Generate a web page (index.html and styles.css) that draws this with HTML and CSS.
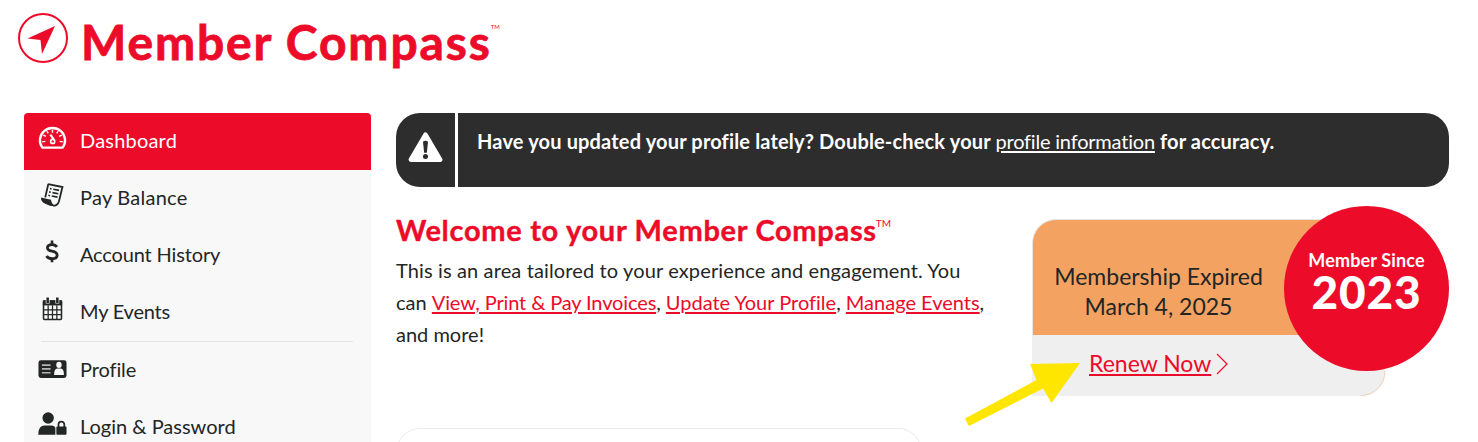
FILE: index.html
```html
<!DOCTYPE html>
<html lang="en">
<head>
    <meta charset="UTF-8">
    <meta name="viewport" content="width=device-width, initial-scale=1.0">
    <title>Member Compass</title>
    <link rel="stylesheet" href="styles.css">
</head>
<body>
    <header class="header">
        <svg class="logo" viewBox="0 0 52 52">
            <circle cx="26" cy="26" r="24" fill="none" stroke="#ec0b29" stroke-width="2"/>
            <path d="M38 14 L10.500 26.500 L23.500 28 L25 42 Z" fill="#ec0b29"/>
        </svg>
        <h1 class="title"><span class="title-text">Member Compass</span><span class="tm">TM</span></h1>
    </header>

    <div class="layout">
        <nav class="sidebar">
            <a class="nav-item active">
                <svg class="icon" viewBox="0 0 30 26">
                    <path d="M4.500 23 A13 12.800 0 1 1 25.500 23 Z" fill="none" stroke="#fff" stroke-width="2.400" stroke-linejoin="round"/>
                    <path d="M15 4.500v3M9.300 6l1.300 2.300M20.700 6l-1.300 2.300M5.400 10l2.800 1.300M24.600 10l-2.800 1.300M4.300 17l3.300-.5M25.700 17l-3.300-.5" stroke="#fff" stroke-width="1.500"/>
                    <path d="M12.800 9.500l3.400 5" stroke="#fff" stroke-width="2.200"/>
                    <circle cx="15.200" cy="16.500" r="2.100" fill="none" stroke="#fff" stroke-width="1.700"/>
                </svg>
                <span class="label l-dashboard">Dashboard</span>
            </a>
            <a class="nav-item">
                <svg class="icon" viewBox="0 0 30 26">
                    <path d="M10.500 1.800L25.300 4.800L21.700 19.500Q20 24.500 16 24" fill="none" stroke="#222625" stroke-width="1.900"/>
                    <path d="M10.700 1.500L7.500 15.500" stroke="#222625" stroke-width="1.900"/>
                    <path d="M3 15.500L13.500 18Q13.500 22 18 24.500Q14 25.300 7.500 22Q3 20 3 15.500Z" fill="#222625"/>
                    <path d="M12.300 6.300l1.700.4M15.800 7l6 1.200M11.500 9.800l1.700.4M15 10.500l6 1.200M10.700 13.300l1.700.4M14.200 14l6 1.200" stroke="#222625" stroke-width="1.700"/>
                </svg>
                <span class="label l-pay">Pay Balance</span>
            </a>
            <a class="nav-item">
                <svg class="icon" viewBox="0 0 30 26">
                    <path d="M19.500 7.800Q18 5.300 14.500 5.300Q9.800 5.300 9.800 8.600Q9.800 11.300 14.500 12.200Q19.800 13.200 19.800 16.400Q19.800 20 14.600 20Q10.500 20 8.800 17.200" fill="none" stroke="#222625" stroke-width="2.900"/>
                    <path d="M14.500 1v4.500M14.500 19.500v4" stroke="#222625" stroke-width="2.700"/>
                </svg>
                <span class="label l-history">Account History</span>
            </a>
            <a class="nav-item">
                <svg class="icon" viewBox="0 0 30 26">
                    <rect x="5.700" y="4.800" width="18.600" height="19" rx="1" fill="none" stroke="#222625" stroke-width="1.600"/>
                    <path d="M5 4h20v5.300H5z" fill="#222625"/>
                    <path d="M10.500 9v15M15 9v15M19.500 9v15M5.500 14h19M5.500 18.700h19" stroke="#222625" stroke-width="1.300"/>
                    <path d="M10 1v6.300M20 1v6.300" stroke="#f8f8f8" stroke-width="4"/>
                    <path d="M10 1v5.700M20 1v5.700" stroke="#222625" stroke-width="2.600"/>
                </svg>
                <span class="label l-events">My Events</span>
            </a>
            <div class="divider"></div>
            <a class="nav-item">
                <svg class="icon" viewBox="0 0 30 26">
                    <rect x=".5" y="6" width="29" height="18.300" rx="2.500" fill="#222625"/>
                    <path d="M4 11h9M4 15h9M4 19h9" stroke="#b4b6b6" stroke-width="1.700"/>
                    <ellipse cx="21.700" cy="10.800" rx="2.800" ry="3.300" fill="#f8f8f8"/>
                    <path d="M16.700 21.300Q16.500 14.800 20 14.600h3.500Q27 14.800 26.800 21.300Z" fill="#f8f8f8"/>
                </svg>
                <span class="label l-profile">Profile</span>
            </a>
            <a class="nav-item">
                <svg class="icon" viewBox="0 0 30 26">
                    <circle cx="10.500" cy="6.800" r="5.900" fill="#222625"/>
                    <path d="M.3 24Q.3 14.500 7 14.500h7Q17 14.500 18 17V24Z" fill="#222625"/>
                    <rect x="19" y="15.500" width="10.500" height="8.500" rx="1" fill="#222625"/>
                    <path d="M21.200 17v-3.500a3 3 0 0 1 6 0V17" fill="none" stroke="#222625" stroke-width="1.800"/>
                </svg>
                <span class="label l-login">Login &amp; Password</span>
            </a>
        </nav>

        <main class="main">
            <section class="alert">
                <div class="alert-icon">
                    <svg class="warning" viewBox="0 0 36 32">
                        <path d="M18 3L33 28.500H3Z" fill="#fff" stroke="#fff" stroke-width="5" stroke-linejoin="round"/>
                        <path d="M15.400 10Q18 8 20.600 10L19.400 21.500H16.600Z" fill="#2d2d2d"/>
                        <circle cx="18" cy="25.300" r="2.600" fill="#2d2d2d"/>
                    </svg>
                </div>
                <p class="alert-text">Have you updated your profile lately? Double-check your <a class="alert-link">profile information</a> for accuracy.</p>
            </section>

            <div class="row">
                <section class="welcome">
                    <h2 class="welcome-title"><span>Welcome to your Member Compass</span><span class="tm">TM</span></h2>
                    <p class="welcome-text">
                        <span class="line line-1">This is an area tailored to your experience and engagement. You</span>
                        <span class="line line-2">can <a class="link invoices">View, Print &amp; Pay Invoices</a>, <a class="link">Update Your Profile</a>, <a class="link">Manage Events</a>,</span>
                        <span class="line line-3">and more!</span>
                    </p>
                </section>

                <section class="membership">
                    <div class="card">
                        <div class="card-top">
                            <span class="expired">Membership Expired</span>
                            <span class="date">March 4, 2025</span>
                        </div>
                        <div class="card-bottom">
                            <a class="link renew">Renew Now</a>
                            <svg class="chevron" viewBox="0 0 12 22"><path d="M1 1l10 10L1 21" fill="none" stroke="#ec0b29" stroke-width="1.200"/></svg>
                        </div>
                    </div>
                    <svg class="card-edge" viewBox="0 0 26 26"><path d="M25 0A24 24 0 0 1 1 24.500" fill="none" stroke="#f4cfae" stroke-width="1"/></svg>
                    <div class="since">
                        <span class="since-label">Member Since</span>
                        <span class="since-year">2023</span>
                    </div>
                </section>
            </div>

            <section class="panel"></section>
        </main>
    </div>

    <svg class="arrow" viewBox="0 0 120 70"><path d="M4 58.500L75.500 20L69 4L119 3L90.500 43L82 28.500L8 66Z" fill="#ffe600"/></svg>
</body>
</html>
```

FILE: styles.css
```css
* {
    box-sizing: border-box;
}
body {
    margin: 0;
    height: 442px;
    overflow: hidden;
    position: relative;
    background: #fff;
    color: #222625;
    font-family: Lato, "Liberation Sans", sans-serif;
    font-size: 20px;
    font-variant-ligatures: none;
}
h1, h2, p {
    margin: 0;
}

/* header */
.header {
    display: flex;
    align-items: flex-start;
    height: 113px;
    padding: 12px 0 0 17px;
}
.logo {
    width: 52px;
    height: 52px;
}
.title {
    display: flex;
    margin-left: 12px;
    color: #ec0b29;
    font-size: 48px;
    line-height: 60px;
    font-weight: 700;
    white-space: nowrap;
}
.title-text {
    letter-spacing: 1.85px;
    -webkit-text-stroke: .8px #ec0b29;
}
.tm {
    font-weight: 400;
}
.title .tm {
    margin-left: -1px;
    font-size: 6px;
    line-height: 30px;
}

.layout {
    display: flex;
    gap: 25px;
    height: 329px;
    padding: 0 29px 0 24px;
    overflow: hidden;
}

/* sidebar */
.sidebar {
    flex: none;
    width: 347px;
    height: 329px;
    overflow: hidden;
    background: #f8f8f8;
    border-radius: 4px 4px 0 0;
}
.nav-item {
    display: flex;
    height: 57px;
    padding: 12px 0 0 14px;
    white-space: nowrap;
}
.nav-item.active {
    background: #ec0b29;
    color: #fff;
}
.icon {
    flex: none;
    width: 29px;
    height: 26px;
    margin-right: 13px;
}
.label {
    line-height: 31px;
}
.l-dashboard {
    letter-spacing: .2px;
}
.l-pay {
    letter-spacing: .25px;
}
.l-history {
    letter-spacing: -.15px;
}
.l-events {
    letter-spacing: -.2px;
}
.l-profile {
    letter-spacing: -.1px;
}
.divider {
    height: 1px;
    margin: 0 18px 0 17px;
    background: #e4e4e4;
}

/* alert */
.main {
    flex: 1;
}
.alert {
    display: flex;
    height: 74px;
    overflow: hidden;
    border-radius: 24px;
    background: #2d2d2d;
    color: #fff;
}
.alert-icon {
    width: 62px;
    padding: 19px 0 0 12px;
    border-right: 3px solid #fff;
}
.warning {
    display: block;
    width: 35px;
    height: 31px;
}
.alert-text {
    padding-left: 19px;
    font-weight: 700;
    letter-spacing: .16px;
    line-height: 57px;
    white-space: nowrap;
}
.alert-link {
    font-weight: 400;
    letter-spacing: -.2px;
    text-decoration: underline;
    text-underline-offset: 2px;
}

/* welcome */
.row {
    display: flex;
    justify-content: space-between;
    height: 241px;
}
.welcome {
    padding-top: 25px;
    white-space: nowrap;
}
.welcome-title {
    display: flex;
    color: #ec0b29;
    font-size: 29px;
    letter-spacing: .7px;
    line-height: 36px;
    -webkit-text-stroke: .4px #ec0b29;
}
.welcome-title .tm {
    margin-left: -1px;
    font-size: 10px;
    letter-spacing: 0;
    line-height: 23px;
    -webkit-text-stroke: 0;
}
.welcome-text {
    margin-top: 6px;
}
.line {
    display: block;
    line-height: 32px;
}
.line-1 {
    letter-spacing: .13px;
}
.link {
    color: #ec0b29;
    text-decoration: underline;
    text-decoration-thickness: 2px;
    text-underline-offset: 2px;
    text-decoration-skip-ink: auto;
}
.invoices {
    letter-spacing: -.13px;
}

/* membership card */
.membership {
    position: relative;
    width: 417px;
    padding-top: 32px;
}
.card {
    width: 353px;
    height: 177px;
    white-space: nowrap;
}
.card-top {
    display: flex;
    flex-direction: column;
    align-items: center;
    height: 116px;
    padding: 41px 100px 0 0;
    border: 1px solid #e6e6e6;
    border-bottom: 0;
    border-radius: 24px 24px 0 0;
    background: #f4a261;
    font-size: 23px;
    line-height: 30px;
}
.card-bottom {
    display: flex;
    height: 61px;
    padding: 12px 0 0 57px;
    border-radius: 0 0 24px 0;
    background: #efefef;
    font-size: 23px;
    line-height: 32px;
}
.chevron {
    width: 12px;
    height: 22px;
    margin: 6px 0 0 5px;
}
.card-edge {
    position: absolute;
    left: 328px;
    top: 184px;
    width: 26px;
    height: 26px;
}
.since {
    position: absolute;
    right: 0;
    top: 19px;
    display: flex;
    flex-direction: column;
    align-items: center;
    width: 165px;
    height: 165px;
    padding-top: 42px;
    border-radius: 50%;
    background: #ec0b29;
    color: #fff;
}
.since-label {
    font-size: 18px;
    letter-spacing: .15px;
    line-height: 25px;
    font-weight: 700;
}
.since-year {
    font-size: 46px;
    letter-spacing: .8px;
    line-height: 37px;
    font-weight: 900;
}

.panel {
    width: 526px;
    height: 60px;
    border: 1px solid #ebebeb;
    border-radius: 24px 24px 0 0;
}

.arrow {
    position: absolute;
    left: 961px;
    top: 360px;
    width: 120px;
    height: 70px;
}
```
